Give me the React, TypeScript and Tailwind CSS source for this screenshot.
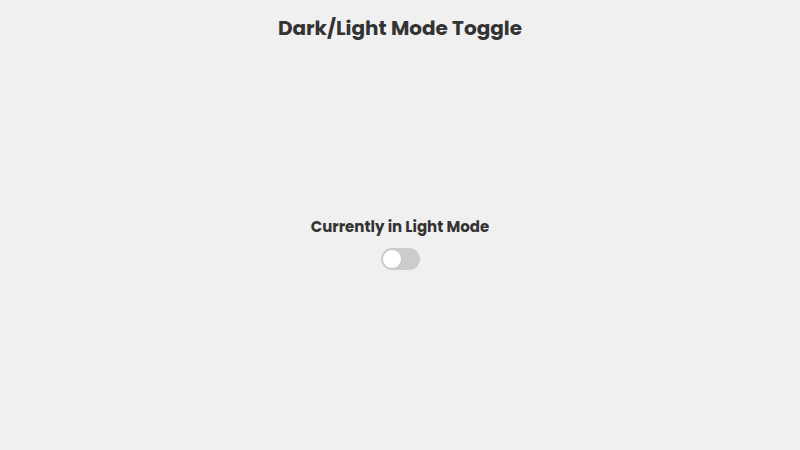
import { useState } from 'react';

export default function App() {
  const [dark, setDark] = useState(false);

  return (
    <div
      className={`h-[450px] w-full flex flex-col items-center ${dark ? 'bg-[#222] text-[#f0f0f0]' : 'bg-[#f0f0f0] text-[#333]'}`}
      style={{ fontFamily: 'Poppins, Inter, "Liberation Sans", sans-serif' }}
    >
      <h1 className="mt-[13px] text-[20px] leading-[30px] font-bold">Dark/Light Mode Toggle</h1>

      <div className="flex-1 flex flex-col items-center justify-center pb-[7px]">
        <h2 className="text-[15px] leading-[22px] font-bold">
          Currently in {dark ? 'Dark' : 'Light'} Mode
        </h2>
        <button
          type="button"
          onClick={() => setDark(!dark)}
          className={`mt-[10px] w-[39px] h-[22px] rounded-full p-[2px] flex items-center ${dark ? 'bg-[#2196f3] justify-end' : 'bg-[#ccc] justify-start'}`}
        >
          <span className="w-[18px] h-[18px] rounded-full bg-white block" />
        </button>
      </div>
    </div>
  );
}
